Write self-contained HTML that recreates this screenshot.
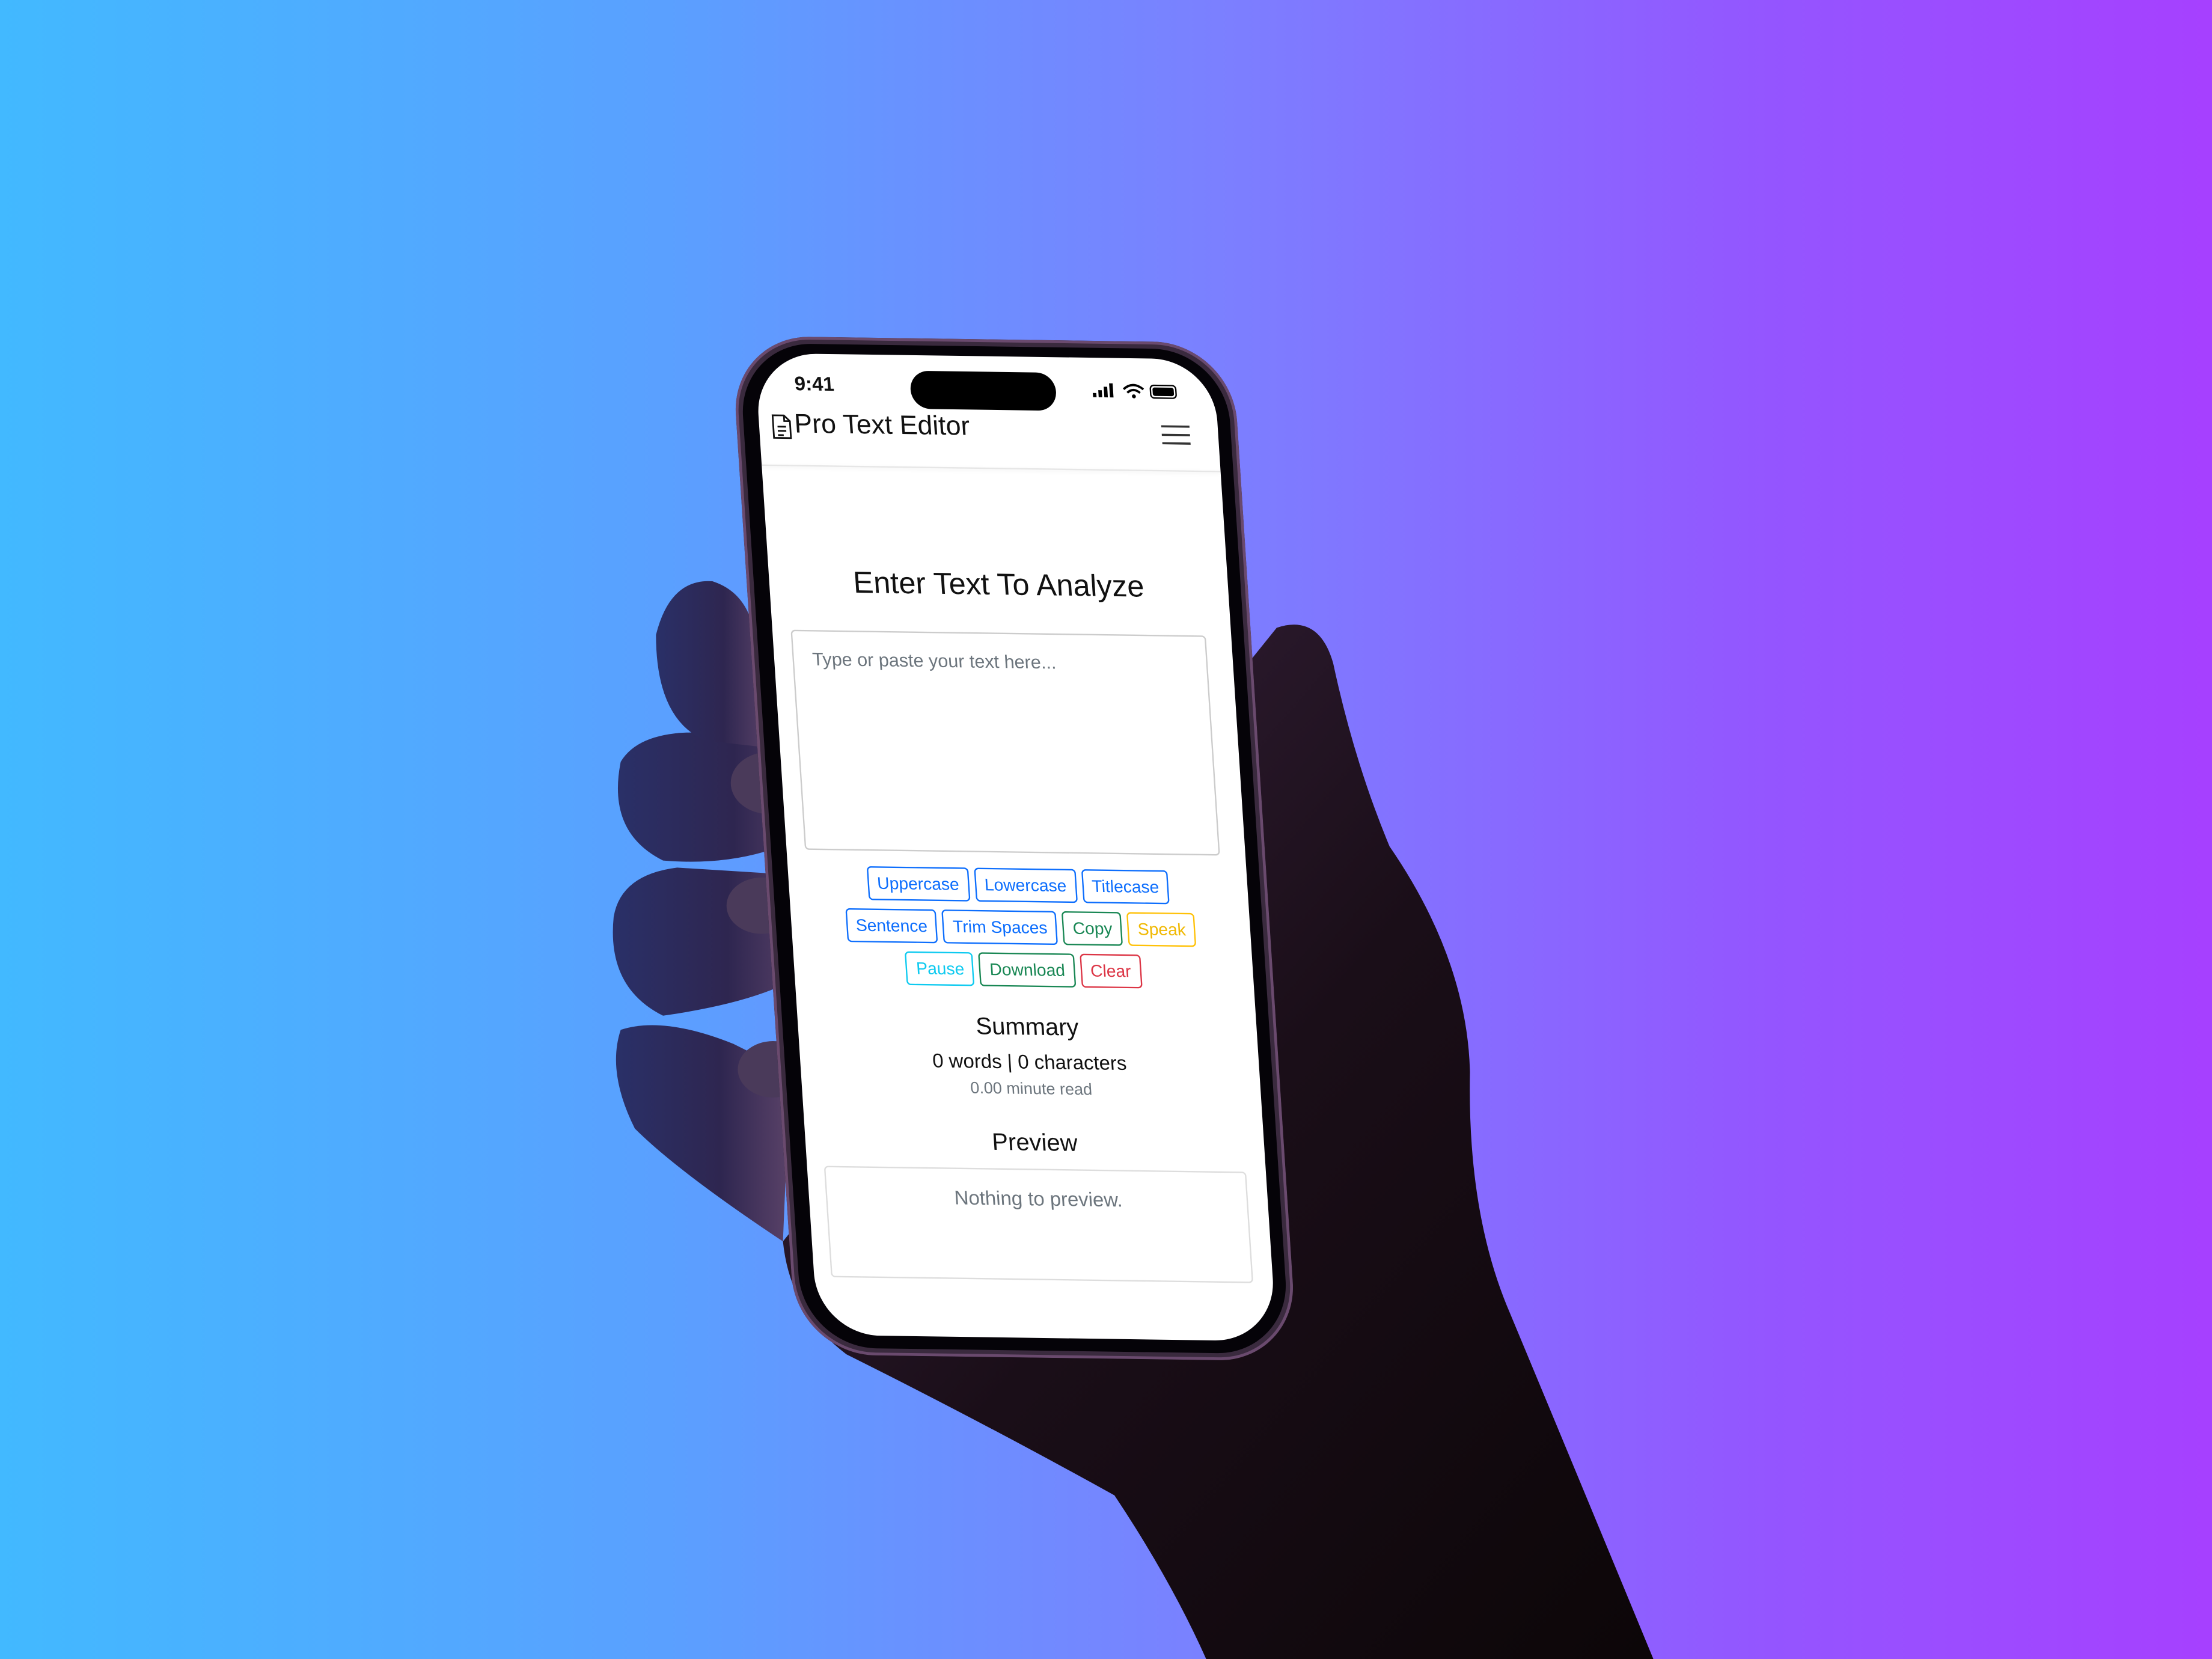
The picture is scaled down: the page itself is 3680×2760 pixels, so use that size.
<!DOCTYPE html>
<html><head><meta charset="utf-8"><style>
html,body{margin:0;padding:0;width:3680px;height:2760px;overflow:hidden}
#w{position:absolute;left:0;top:0;width:1568px;height:1176px;transform:scale(2.34694);transform-origin:0 0;
background:linear-gradient(90deg,#42b9ff 0%,#5aa0ff 30%,#7b80ff 55%,#9455ff 80%,#a640ff 100%);font-family:"Liberation Sans",sans-serif;overflow:hidden}
#phone{position:absolute;left:518px;top:238px;width:355px;height:722px;transform:skewX(3.7deg) skewY(0.8deg);transform-origin:0 0}
.frame{position:absolute;inset:0;border-radius:56px;background:#3a2a3e;box-shadow:0 0 0 2px #6a4a6e inset}
.bezel{position:absolute;left:5px;top:5px;right:5px;bottom:5px;border-radius:52px;background:#050308}
.screen{position:absolute;left:16px;top:12px;right:14px;bottom:14px;border-radius:44px;background:#fff;overflow:hidden;color:#111}
.abs{position:absolute}
.btn{display:inline-block;border:1px solid;border-radius:3px;font-size:12px;padding:4px 6px;margin:0 2px;background:#fff}
.row{position:absolute;left:0;width:100%;text-align:center;white-space:nowrap}
.b{color:#0d6efd;border-color:#0d6efd}.g{color:#198754;border-color:#198754}.y{color:#f0b800;border-color:#ffc107}.c{color:#0dcaf0;border-color:#0dcaf0}.r{color:#dc3545;border-color:#dc3545}
</style></head><body><div id="w">
<svg class="abs" style="left:0;top:0" width="1568" height="1176">
<defs><linearGradient id="h" x1="0" y1="0" x2="1" y2="1"><stop offset="0" stop-color="#3a2440"/><stop offset=".5" stop-color="#1a0e18"/><stop offset="1" stop-color="#0c0608"/></linearGradient>
<linearGradient id="f" x1="0" y1="0" x2="1" y2="0"><stop offset="0" stop-color="#2a3068"/><stop offset=".6" stop-color="#2e2650"/><stop offset="1" stop-color="#5a4268"/></linearGradient></defs>
<path d="M905 445 Q935 435 945 470 Q960 540 985 600 Q1040 680 1042 760 Q1040 860 1070 930 Q1120 1050 1172 1176 L855 1176 Q830 1120 790 1060 Q700 1010 600 960 Q560 930 555 880 Z" fill="url(#h)"/>
<path d="M555 880 Q480 830 450 800 Q430 760 440 730 Q470 720 520 740 L560 760 Z" fill="url(#f)"/>
<path d="M470 720 Q430 700 435 650 Q440 620 480 615 L560 620 L570 690 Q540 710 470 720Z" fill="url(#f)"/>
<path d="M470 610 Q430 590 440 540 Q455 515 510 520 L570 535 L575 590 Q530 615 470 610Z" fill="url(#f)"/>
<path d="M500 525 Q465 510 465 450 Q475 410 505 412 Q530 420 535 450 L545 530 Z" fill="url(#f)"/>
<ellipse cx="545" cy="555" rx="27" ry="22" fill="#4a3a5a"/>
<ellipse cx="540" cy="642" rx="25" ry="20" fill="#4a3a5a"/>
<ellipse cx="548" cy="758" rx="25" ry="20" fill="#4a3a5a"/>
</svg>
<div id="phone"><div class="frame"></div><div class="bezel"></div>
<div class="screen">
 <div class="abs" style="left:27px;top:13px;font-size:14px;font-weight:bold">9:41</div>
 <div class="abs" style="left:109px;top:11px;width:103px;height:27px;border-radius:14px;background:#000"></div>
 <svg class="abs" style="left:238px;top:17px" width="60" height="12"><rect x="0" y="8" width="2.5" height="3" fill="#000"/><rect x="4" y="6" width="2.5" height="5" fill="#000"/><rect x="8" y="3.5" width="2.5" height="7.5" fill="#000"/><rect x="12" y="1" width="2.5" height="10" fill="#000"/><path d="M22 5 Q29 -1 36 5 M24.5 7.5 Q29 3.5 33.5 7.5" stroke="#000" stroke-width="1.6" fill="none"/><circle cx="29" cy="10" r="1.4"/><rect x="41" y="2" width="18" height="9" rx="2.5" fill="none" stroke="#000"/><rect x="42.5" y="3.5" width="15" height="6" rx="1.5" fill="#000"/></svg>
 <svg class="abs" style="left:8px;top:43px" width="16" height="18" viewBox="0 0 16 18"><path d="M2 1h8l4 4v12H2z M10 1v4h4 M5 9h6 M5 12h6 M5 15h4" stroke="#111" stroke-width="1.2" fill="none"/></svg>
 <div class="abs" style="left:25px;top:40px;font-size:19px">Pro Text Editor</div>
 <svg class="abs" style="left:284px;top:46px" width="22" height="16"><path d="M1 2h20M1 8h20M1 14h20" stroke="#333" stroke-width="1.5"/></svg>
 <div class="abs" style="left:0;right:0;top:79px;height:1px;background:#e6e6e6;box-shadow:0 1px 3px rgba(0,0,0,.08)"></div>
 <div class="row" style="top:150px;font-size:21.5px;color:#111">Enter Text To Analyze</div>
 <div class="abs" style="left:13px;top:196px;width:292px;height:154px;border:1px solid #ccc;border-radius:3px"></div>
 <div class="abs" style="left:27px;top:209px;font-size:13px;color:#6c757d">Type or paste your text here...</div>
 <div class="row" style="top:363px"><span class="btn b">Uppercase</span><span class="btn b">Lowercase</span><span class="btn b">Titlecase</span></div>
 <div class="row" style="top:393px"><span class="btn b">Sentence</span><span class="btn b">Trim Spaces</span><span class="btn g">Copy</span><span class="btn y">Speak</span></div>
 <div class="row" style="top:423px"><span class="btn c">Pause</span><span class="btn g">Download</span><span class="btn r">Clear</span></div>
 <div class="row" style="top:466px;font-size:17px">Summary</div>
 <div class="row" style="top:492px;font-size:14px">0 words | 0 characters</div>
 <div class="row" style="top:514px;font-size:11.5px;color:#6c757d">0.00 minute read</div>
 <div class="row" style="top:548px;font-size:17px">Preview</div>
 <div class="abs" style="left:12px;top:576px;width:297px;height:77px;border:1px solid #ddd;border-radius:3px"></div>
 <div class="row" style="top:589px;font-size:14px;color:#6c757d">Nothing to preview.</div>
</div></div>
</div></body></html>
